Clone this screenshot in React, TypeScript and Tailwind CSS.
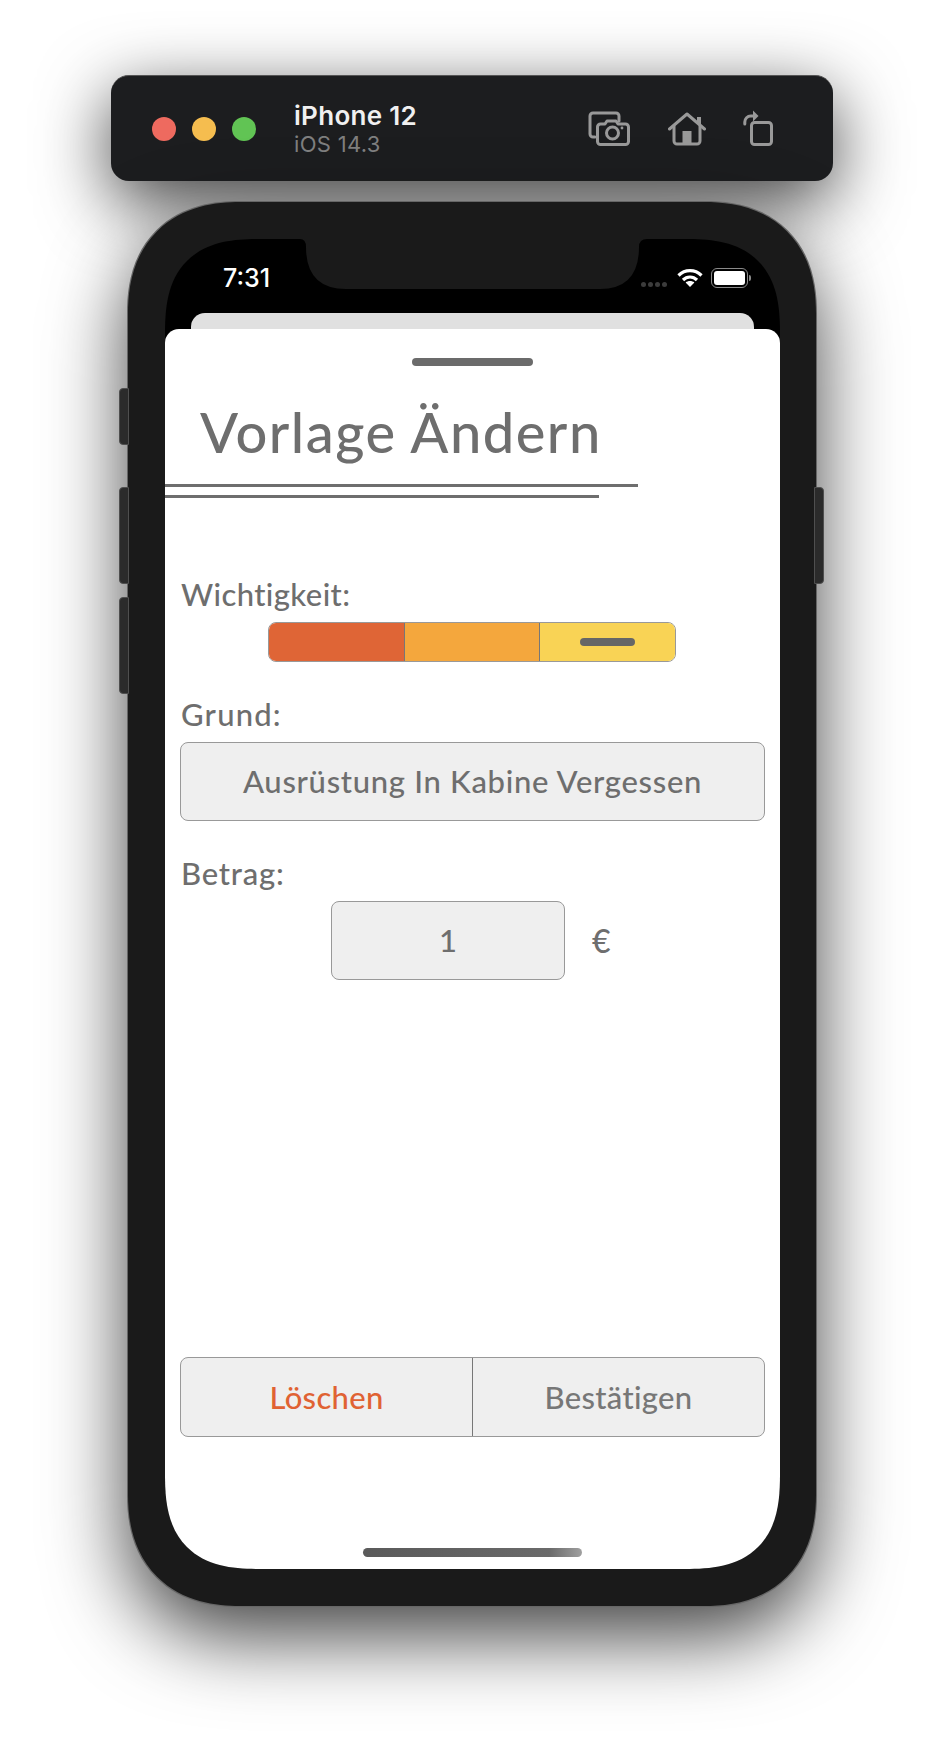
import React from "react";

const Camera = () => (
  <svg width="42" height="35" viewBox="0 0 42 35" fill="none" stroke="#999999" strokeWidth="3" strokeLinejoin="round" strokeLinecap="round">
    <path d="M7 26H5a3 3 0 0 1-3-3V5a3 3 0 0 1 3-3h23a3 3 0 0 1 3 3v5" />
    <path d="M12.5 13H17l2-3h9l2 3h7.5a3 3 0 0 1 3 3v14.5a3 3 0 0 1-3 3h-25a3 3 0 0 1-3-3V16a3 3 0 0 1 3-3z" />
    <circle cx="24.5" cy="22" r="6" />
    <circle cx="34" cy="17" r="1.4" fill="#999999" stroke="none" />
  </svg>
);

const Home = () => (
  <svg width="38" height="34" viewBox="0 0 38 34" fill="none" stroke="#999999" strokeWidth="3" strokeLinejoin="round" strokeLinecap="round">
    <path d="M1.5 17L19 2l17.5 15" />
    <path d="M31 5v7" strokeWidth="4" strokeLinecap="butt" />
    <path d="M6 14v15a3 3 0 0 0 3 3h20a3 3 0 0 0 3-3V14" />
    <rect x="14.5" y="19" width="9" height="13" fill="#999999" stroke="none" />
  </svg>
);

const Rotate = () => (
  <svg width="30" height="36" viewBox="0 0 30 36" fill="none" stroke="#999999" strokeWidth="3" strokeLinejoin="round" strokeLinecap="round">
    <rect x="8.5" y="12.5" width="20" height="22" rx="3" />
    <path d="M1.8 14v-2a6 6 0 0 1 6-6h3" />
    <path d="M10 0.5L15.5 6L10 11.5z" fill="#999999" stroke="none" />
  </svg>
);

const Wifi = () => (
  <svg width="26" height="19" viewBox="0 0 26 19" fill="none" stroke="#ffffff" strokeWidth="3.2">
    <path d="M1.5 7.5C8 1 18 1 24.5 7.5" />
    <path d="M6 12C10 8 16 8 20 12" />
    <path d="M13 19L8.6 14.6C11 12.6 15 12.6 17.4 14.6z" fill="#ffffff" stroke="none" />
  </svg>
);

const Notch = () => (
  <svg width="347" height="50" viewBox="0 0 347 50" fill="#1a1a1a">
    <path d="M0 0H347Q339 0 339 8Q339 50 300 50H46Q6 50 6 8Q6 0 0 0Z" />
  </svg>
);

const SideButton = ({ className }: { className: string }) => (
  <div className={"absolute w-[10px] bg-[#2b2b2b] border border-[#4f4f4f] " + className} />
);

const Label = ({ children, className }: { children: React.ReactNode; className: string }) => (
  <div className={"h-[40px] text-[31px] leading-[40px] text-[#6e6e6e] " + className}>{children}</div>
);

export default function App() {
  return (
    <div className="w-[944px] h-[1756px] bg-white overflow-hidden pt-[75px] font-['Lato',sans-serif] font-medium">
      <div className="ml-[111px] w-[722px] h-[106px] rounded-[18px] bg-[#1c1d1f] border-t border-[#555555] shadow-[0_20px_70px_rgba(0,0,0,0.75)] flex items-center font-['Inter',sans-serif] font-normal">
        <div className="ml-[41px] flex gap-[16px]">
          <div className="w-[24px] h-[24px] rounded-full bg-[#ee6a5f]" />
          <div className="w-[24px] h-[24px] rounded-full bg-[#f5bd4f]" />
          <div className="w-[24px] h-[24px] rounded-full bg-[#61c454]" />
        </div>
        <div className="ml-[38px] w-[294px]">
          <div className="text-[26px] leading-[31px] tracking-[0.3px] font-semibold text-[#f0f0f0]">iPhone 12</div>
          <div className="text-[22px] leading-[27px] tracking-[0.3px] text-[#7f7f7f]">iOS 14.3</div>
        </div>
        <Camera />
        <div className="ml-[38px]"><Home /></div>
        <div className="ml-[37px] -mt-[2px]"><Rotate /></div>
      </div>

      <div className="relative mt-[21px] ml-[128px] w-[688px] h-[1404px] rounded-[112px] [corner-shape:superellipse(1.2)] bg-[#1a1a1a] shadow-[0_0_0_1px_#666666,0_30px_80px_rgba(0,0,0,0.75)] pt-[37px] px-[37px]">
        <SideButton className="-left-[9px] top-[186px] h-[57px] rounded-l-[4px]" />
        <SideButton className="-left-[9px] top-[285px] h-[97px] rounded-l-[4px]" />
        <SideButton className="-left-[9px] top-[395px] h-[97px] rounded-l-[4px]" />
        <SideButton className="-right-[8px] top-[285px] h-[97px] rounded-r-[4px]" />

        <div className="relative w-[615px] h-[1330px] rounded-[95px] [corner-shape:superellipse(1.4)] bg-black overflow-hidden flex flex-col">
          <div className="absolute left-[135px] top-0"><Notch /></div>

          <div className="h-[74px] flex items-start">
            <div className="ml-[58px] mt-[24px] w-[51px] text-[25px] leading-[30px] font-medium text-white font-['Inter',sans-serif]">7:31</div>
            <div className="ml-[367px] mt-[43px] flex gap-[2px]">
              <div className="w-[5px] h-[5px] rounded-full bg-[#3c3c3c]" />
              <div className="w-[5px] h-[5px] rounded-full bg-[#3c3c3c]" />
              <div className="w-[5px] h-[5px] rounded-full bg-[#3c3c3c]" />
              <div className="w-[5px] h-[5px] rounded-full bg-[#3c3c3c]" />
            </div>
            <div className="ml-[10px] mt-[29px]"><Wifi /></div>
            <div className="ml-[8px] mt-[29px] flex items-center">
              <div className="w-[37px] h-[20px] rounded-[6px] border-[1.5px] border-[#8a8a8a] p-[2px]">
                <div className="w-full h-full rounded-[3px] bg-white" />
              </div>
              <div className="ml-[1px] w-[2px] h-[6px] rounded-r-[2px] bg-[#8a8a8a]" />
            </div>
          </div>

          <div className="mx-[26px] h-[16px] rounded-t-[14px] bg-[#e0e0e0]" />

          <div className="flex-1 bg-white rounded-t-[14px] flex flex-col">
            <div className="mt-[29px] mx-auto w-[121px] h-[8px] rounded-full bg-[#6b6b6b]" />
            <div className="mt-[32px] ml-[35px] h-[68px] text-[56px] leading-[68px] tracking-[1.5px] text-[#6e6e6e]">Vorlage Ändern</div>
            <div className="mt-[18px] w-[473px] h-[3px] bg-[#6e6e6e]" />
            <div className="mt-[8px] w-[434px] h-[3px] bg-[#6e6e6e]" />

            <Label className="mt-[76px] ml-[16px] tracking-[0.4px]">Wichtigkeit:</Label>
            <div className="mt-[8px] ml-[103px] w-[408px] h-[40px] rounded-[8px] border border-[#999999] overflow-hidden flex">
              <div className="flex-1 bg-[#df6536] border-r border-[#777777]" />
              <div className="flex-1 bg-[#f4a73d] border-r border-[#777777]" />
              <div className="flex-1 bg-[#f9d355] flex items-center justify-center">
                <div className="w-[55px] h-[8px] rounded-full bg-[#666666]" />
              </div>
            </div>

            <Label className="mt-[32px] ml-[16px] tracking-[1.2px]">Grund:</Label>
            <div className="mt-[8px] mx-[15px] h-[79px] rounded-[8px] border border-[#999999] bg-[#efefef] flex items-center justify-center text-[31px] tracking-[0.7px] text-[#6e6e6e]">
              Ausrüstung In Kabine Vergessen
            </div>

            <Label className="mt-[32px] ml-[16px] tracking-[0.8px]">Betrag:</Label>
            <div className="mt-[8px] ml-[166px] flex items-center">
              <div className="w-[234px] h-[79px] rounded-[8px] border border-[#999999] bg-[#efefef] flex items-center justify-center text-[31px] text-[#6e6e6e]">1</div>
              <div className="ml-[27px] text-[32px] text-[#6e6e6e]">€</div>
            </div>

            <div className="mt-[377px] mx-[15px] h-[80px] rounded-[8px] border border-[#999999] bg-[#efefef] flex text-[31px] tracking-[0.3px]">
              <div className="w-[292px] border-r border-[#777777] flex items-center justify-center text-[#e06233]">Löschen</div>
              <div className="flex-1 flex items-center justify-center text-[#777777]">Bestätigen</div>
            </div>

            <div className="mt-[111px] mx-auto w-[219px] h-[9px] rounded-full bg-linear-to-r from-[#5a5a5a] via-[#6a6a6a] via-85% to-[#a0a0a0]" />
          </div>
        </div>
      </div>
    </div>
  );
}
